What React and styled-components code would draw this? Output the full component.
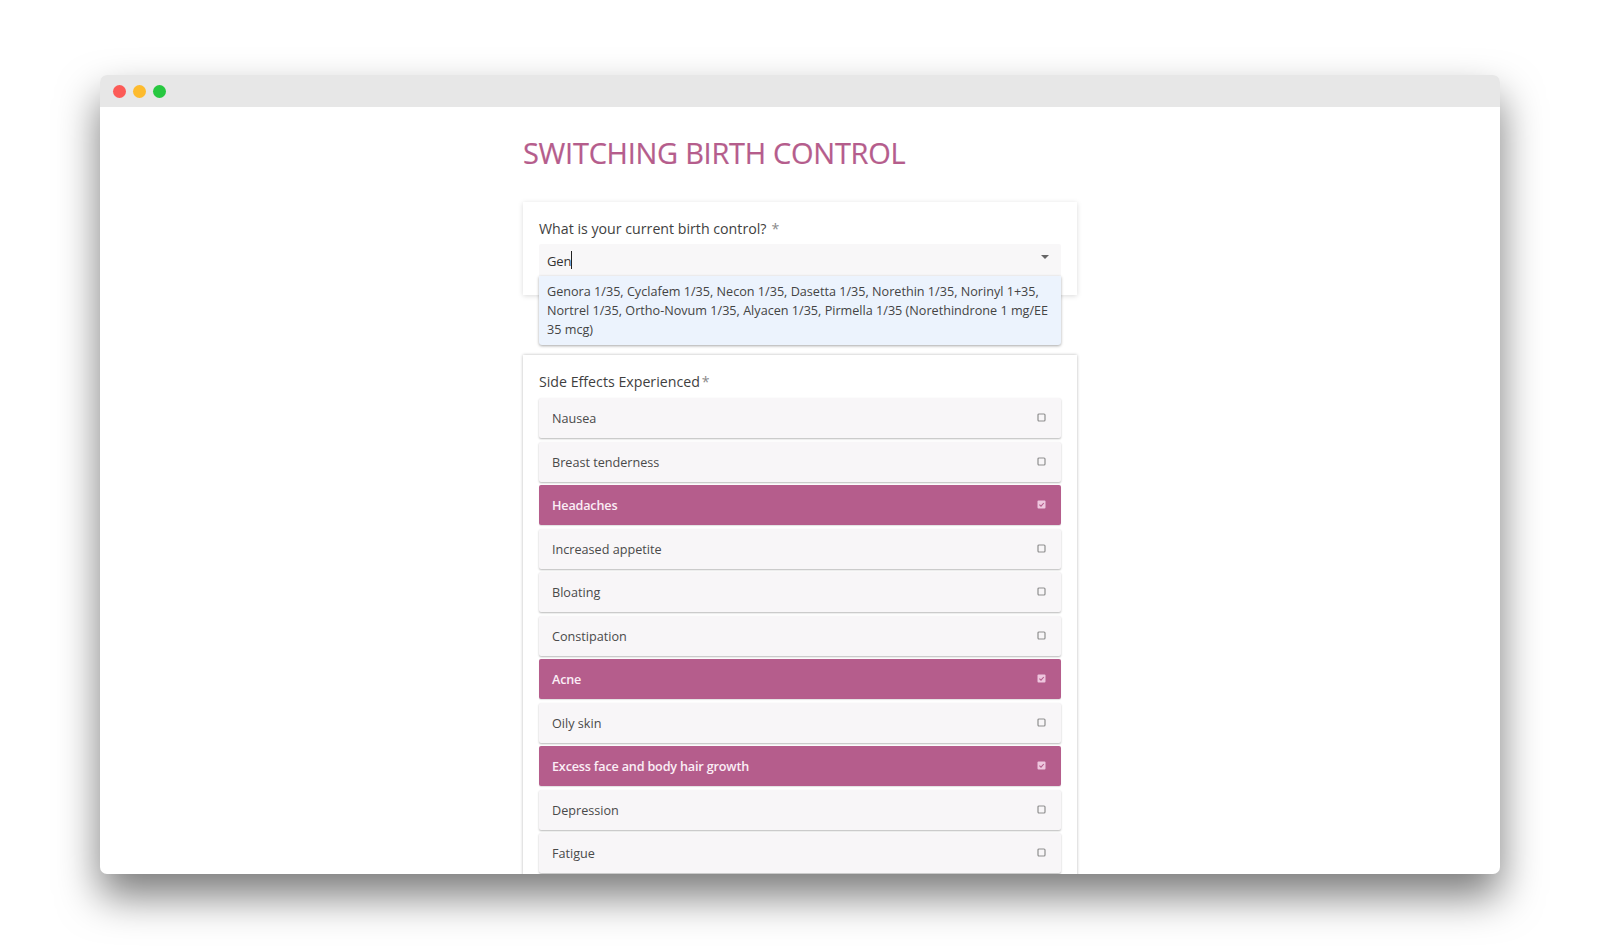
import React from "react";
import styled, { createGlobalStyle } from "styled-components";

const Global = createGlobalStyle`
  html, body { margin: 0; padding: 0; background: #fff; }
  body { font-family: "Open Sans", "Liberation Sans", sans-serif; height: 949px; overflow: hidden; }
`;

const Stage = styled.div`
  padding: 75px 100px 0;
  height: 949px;
  box-sizing: border-box;
`;

const Window = styled.div`
  height: 799px;
  border-radius: 7px;
  background: #fff;
  overflow: hidden;
  box-shadow: 0 22px 42px rgba(0, 0, 0, 0.52);
`;

const TitleBar = styled.div`
  height: 32px;
  background: #e7e7e7;
  display: flex;
  align-items: center;
  gap: 7px;
  padding: 1px 0 0 13px;
  box-sizing: border-box;
`;

const Dot = styled.span`
  width: 13px;
  height: 13px;
  border-radius: 50%;
  background: ${(p) => p.$color};
`;

const Page = styled.main`
  width: 554px;
  margin: 0 auto;
  padding-top: 22.5px;
`;

const Title = styled.h1`
  margin: 0 0 27.5px;
  font-size: 29px;
  line-height: 45px;
  font-weight: 400;
  color: #b55d8c;
  letter-spacing: -0.28px;
  -webkit-text-stroke: 0.2px #b55d8c;
`;

const Card = styled.section`
  position: relative;
  background: #fff;
  padding: 16px;
  box-sizing: border-box;
  box-shadow: ${(p) => (p.$outlined ? "0 0 3px rgba(0, 0, 0, 0.28)" : "0 1px 5px rgba(0, 0, 0, 0.15)")};
  ${(p) => p.$height && `height: ${p.$height}px;`}
  ${(p) => p.$gap && `margin-top: ${p.$gap}px;`}
`;

const Label = styled.div`
  font-size: 14.2px;
  line-height: 22px;
  color: #3f3f3f;
`;

const Star = styled.span`
  color: #8a8a8a;
  margin-left: ${(p) => p.$space}px;
`;

const SelectBox = styled.div`
  margin-top: 4px;
  height: 40px;
  background: #f8f7f8;
  display: flex;
  align-items: flex-start;
  justify-content: space-between;
  padding: 7px 12px 0 8px;
  box-sizing: border-box;
  font-size: 13px;
  line-height: 20px;
  color: #333;
  border-radius: 2px 2px 0 0;
`;

const Typed = styled.span`
  display: inline-block;
  border-right: 1px solid #222;
  height: 18px;
  line-height: 20px;
  letter-spacing: -0.1px;
`;

const Caret = styled.span`
  width: 0;
  height: 0;
  margin-top: 4px;
  border-left: 4px solid transparent;
  border-right: 4px solid transparent;
  border-top: 4px solid #666;
`;

const Menu = styled.div`
  position: absolute;
  left: 16px;
  right: 16px;
  top: 74px;
  height: 69px;
  padding: 6px 8px;
  box-sizing: border-box;
  background: #ecf3fd;
  border-radius: 0 0 3px 3px;
  box-shadow: 0 1px 3px rgba(0, 0, 0, 0.35);
  font-size: 12.64px;
  line-height: 19px;
  color: #444;
`;

const List = styled.div`
  margin-top: 5px;
  display: flex;
  flex-direction: column;
  gap: 3.5px;
`;

const Option = styled.div`
  height: 40px;
  flex: none;
  display: flex;
  align-items: center;
  justify-content: space-between;
  padding: 0 14px 0 13px;
  box-sizing: border-box;
  font-size: 12.64px;
  border-radius: 2px;
  background: ${(p) => (p.$on ? "#b55d8c" : "#f8f6f8")};
  color: ${(p) => (p.$on ? "#fbeef6" : "#4a4a4a")};
  font-weight: ${(p) => (p.$on ? 600 : 400)};
  letter-spacing: ${(p) => (p.$on ? "-0.18px" : "0")};
  box-shadow: ${(p) => (p.$on ? "0 1px 1px rgba(0,0,0,0.12)" : "0 1px 2px rgba(0,0,0,0.28)")};
`;

const Check = styled.svg`
  width: 10px;
  height: 10px;
  flex: none;
`;

const Box = ({ on }) => (
  <Check viewBox="0 0 10 10">
    {on ? (
      <>
        <rect x="0.5" y="0.5" width="8" height="8" rx="1" fill="#eec6de" />
        <path d="M2.4 4.6 4 6.2 6.8 3" fill="none" stroke="#b55d8c" strokeWidth="1.1" />
      </>
    ) : (
      <rect x="1" y="1" width="7" height="7" rx="1" fill="none" stroke="#8f8f8f" strokeWidth="1.2" />
    )}
  </Check>
);

const effects = [
  ["Nausea"],
  ["Breast tenderness"],
  ["Headaches", true],
  ["Increased appetite"],
  ["Bloating"],
  ["Constipation"],
  ["Acne", true],
  ["Oily skin"],
  ["Excess face and body hair growth", true],
  ["Depression"],
  ["Fatigue"],
];

export default function App() {
  return (
    <Stage>
      <Global />
      <Window>
        <TitleBar>
          <Dot $color="#fc5b57" />
          <Dot $color="#fdbb2e" />
          <Dot $color="#27c840" />
        </TitleBar>
        <Page>
          <Title>SWITCHING BIRTH CONTROL</Title>
          <Card $height={93}>
            <Label>
              What is your current birth control?<Star $space={5}>*</Star>
            </Label>
            <SelectBox>
              <Typed>Gen</Typed>
              <Caret />
            </SelectBox>
            <Menu>
              Genora 1/35, Cyclafem 1/35, Necon 1/35, Dasetta 1/35, Norethin 1/35, Norinyl 1+35,
              Nortrel 1/35, Ortho-Novum 1/35, Alyacen 1/35, Pirmella 1/35 (Norethindrone 1 mg/EE
              35 mcg)
            </Menu>
          </Card>
          <Card $gap={60} $outlined>
            <Label>
              Side Effects Experienced<Star $space={2}>*</Star>
            </Label>
            <List>
              {effects.map(([name, on]) => (
                <Option key={name} $on={on}>
                  {name}
                  <Box on={on} />
                </Option>
              ))}
            </List>
          </Card>
        </Page>
      </Window>
    </Stage>
  );
}
